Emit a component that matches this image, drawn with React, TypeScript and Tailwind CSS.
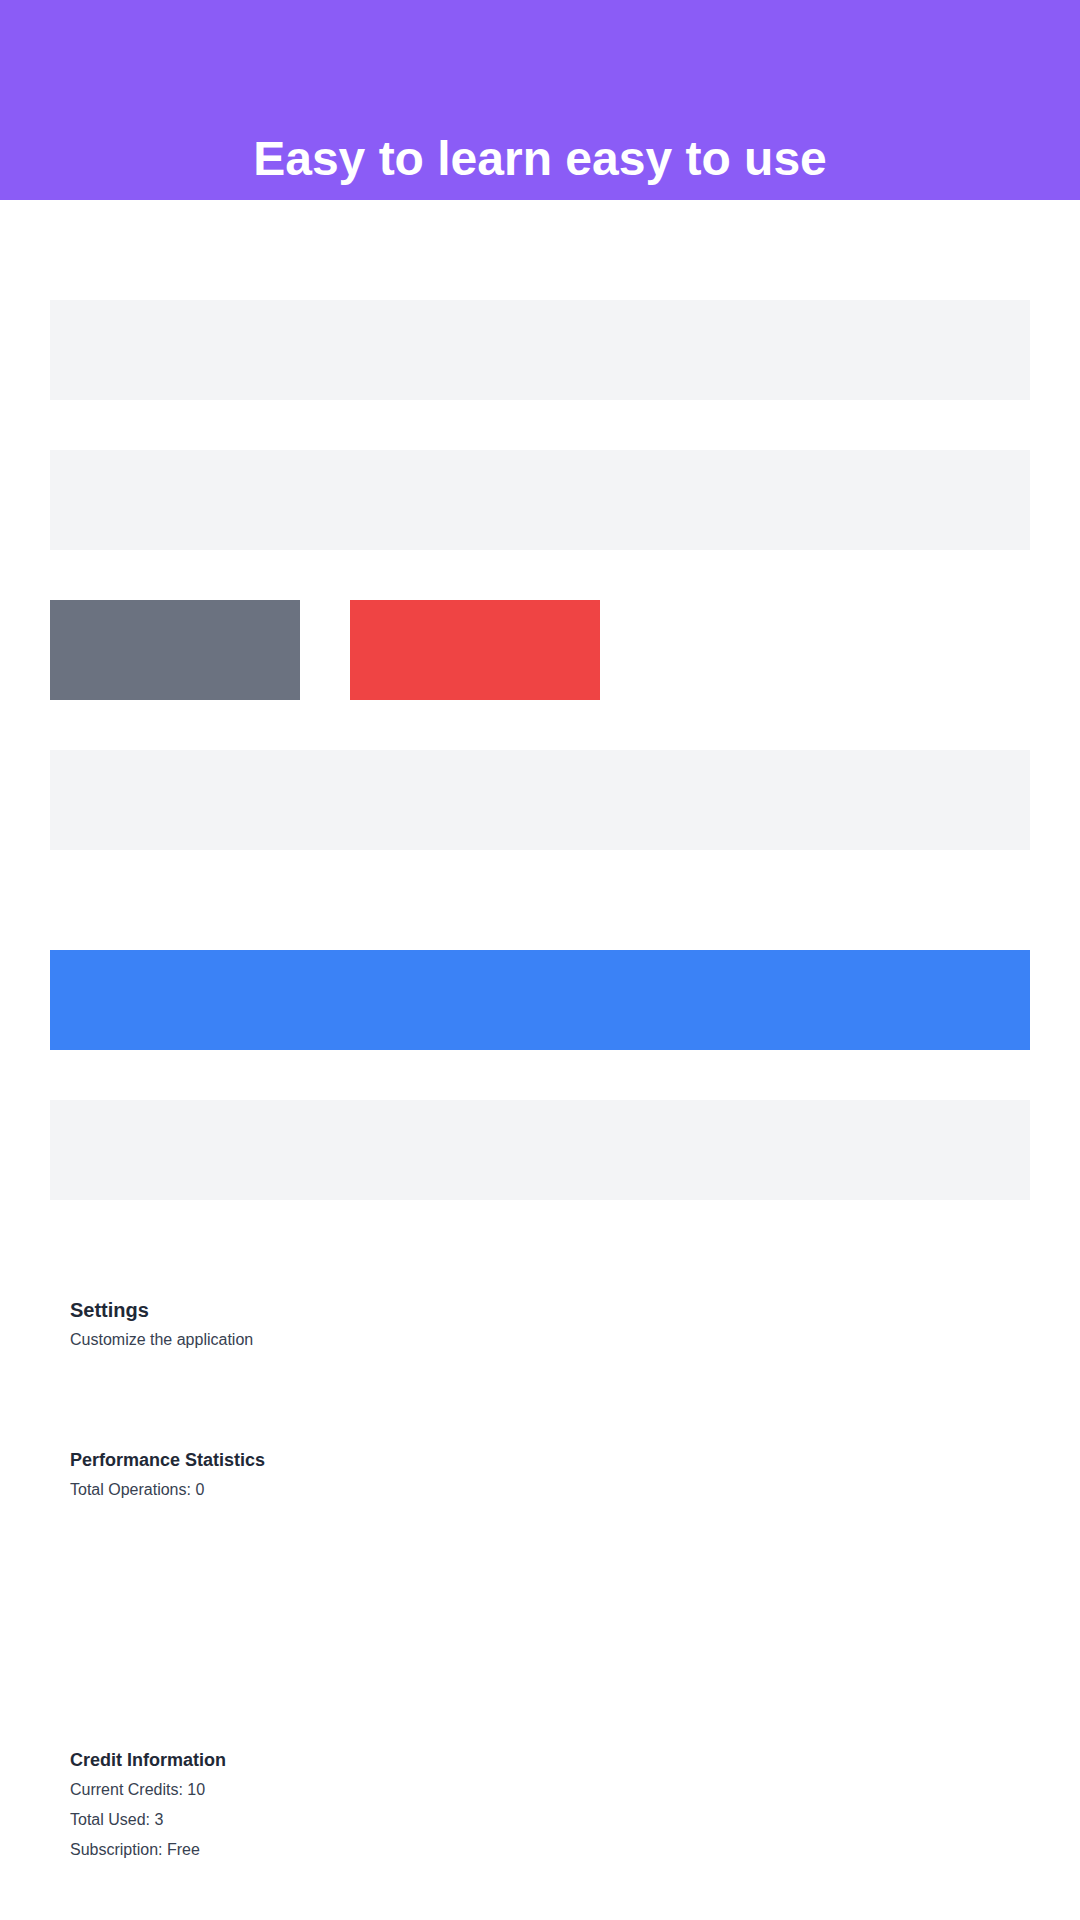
import React from 'react';

function Section({
  title,
  lines,
  className,
  titleClass = 'text-lg',
}: {
  title: string;
  lines: string[];
  className: string;
  titleClass?: string;
}) {
  return (
    <section className={`px-5 ${className}`}>
      <h2 className={`${titleClass} font-bold text-[#1f2937] mb-1`}>{title}</h2>
      <div className="flex flex-col gap-[6px]">
        {lines.map((line) => (
          <p key={line} className="text-base text-[#374151]">
            {line}
          </p>
        ))}
      </div>
    </section>
  );
}

export default function App() {
  return (
    <div className="min-h-screen bg-white font-['Liberation_Sans',Arial,sans-serif]">
      <header className="h-[200px] bg-[#8b5cf6] flex items-end justify-center pb-[17px]">
        <h1 className="text-5xl leading-none font-bold text-white">Easy to learn easy to use</h1>
      </header>

      <main className="px-[50px] pt-[100px] pb-12">
        <div className="h-[100px] bg-[#f3f4f6]" />
        <div className="h-[100px] bg-[#f3f4f6] mt-[50px]" />

        <div className="flex gap-[50px] mt-[50px]">
          <div className="w-[250px] h-[100px] bg-[#6b7280]" />
          <div className="w-[250px] h-[100px] bg-[#ef4444]" />
        </div>

        <div className="h-[100px] bg-[#f3f4f6] mt-[50px]" />
        <div className="h-[100px] bg-[#3b82f6] mt-[100px]" />
        <div className="h-[100px] bg-[#f3f4f6] mt-[50px]" />

        <Section className="mt-[96px]" titleClass="text-xl" title="Settings" lines={['Customize the application']} />
        <Section className="mt-[94px]" title="Performance Statistics" lines={['Total Operations: 0']} />
        <Section
          className="mt-[244px]"
          title="Credit Information"
          lines={['Current Credits: 10', 'Total Used: 3', 'Subscription: Free']}
        />
      </main>
    </div>
  );
}
